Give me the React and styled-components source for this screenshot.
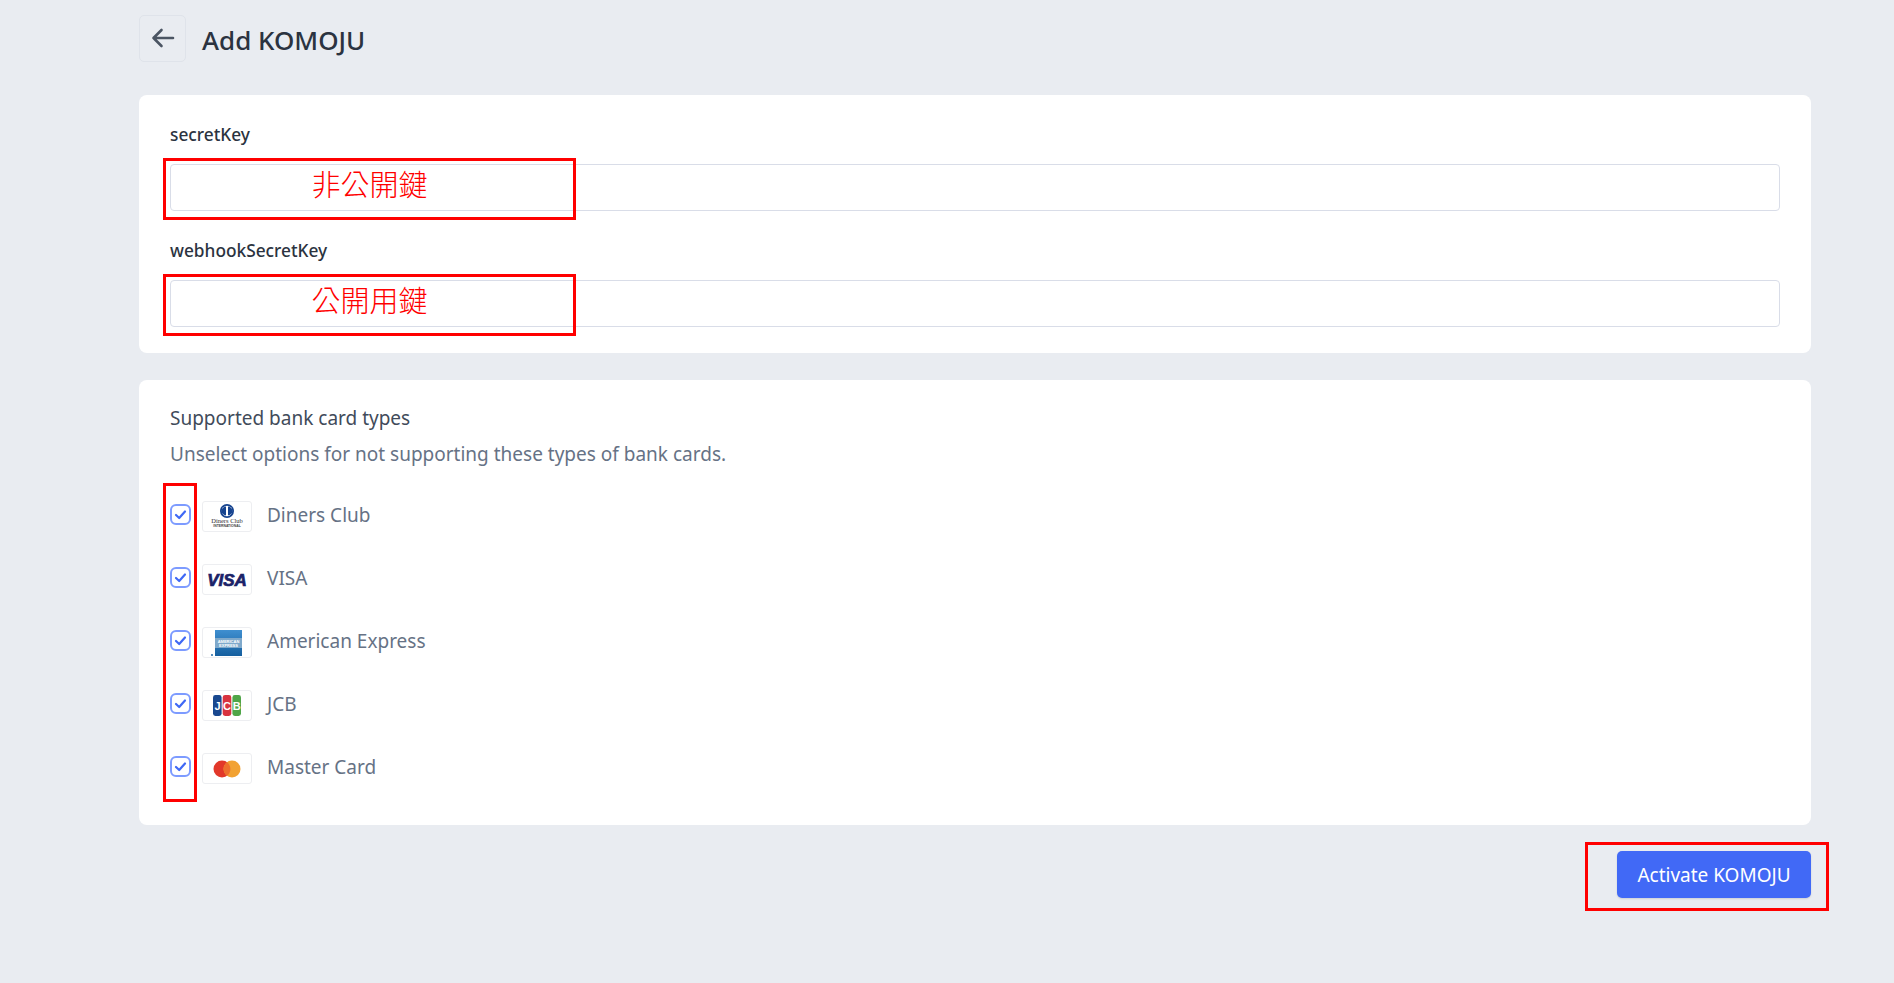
import React from "react";
import styled, { createGlobalStyle } from "styled-components";

const Global = createGlobalStyle`
  html, body { margin: 0; padding: 0; background: #e9ecf1; }
  body { font-family: "Noto Sans", "Noto Sans CJK JP", sans-serif; color: #374151; }
`;

const Page = styled.div`
  width: 1894px;
  height: 983px;
  box-sizing: border-box;
  padding: 15px 83px 0 139px;
  display: flex;
  flex-direction: column;
  overflow: hidden;
`;

const Header = styled.header`
  display: flex;
  align-items: center;
  gap: 16px;
  height: 46px;
  margin-bottom: 34px;
`;

const BackButton = styled.button`
  width: 47px;
  height: 47px;
  box-sizing: border-box;
  padding: 0;
  border: 1px solid #dfe3ea;
  border-radius: 5px;
  background: #e9ecf1;
  color: #4b5563;
  display: flex;
  align-items: center;
  justify-content: center;
`;

const Title = styled.h1`
  margin: 4px 0 0;
  font-size: 26px;
  line-height: 32px;
  font-weight: 500;
  color: #2b3340;
`;

const Card = styled.section`
  position: relative;
  background: #fff;
  border-radius: 8px;
  box-sizing: border-box;
  padding: ${(p) => p.$padding};
  margin-bottom: ${(p) => p.$mb || 0}px;
`;

const Field = styled.div`
  margin-bottom: ${(p) => p.$mb || 0}px;
`;

const Label = styled.label`
  display: block;
  font-size: 17.3px;
  line-height: 24px;
  font-weight: 500;
  color: #2b3340;
  margin-bottom: 17px;
`;

const InputWrap = styled.div`
  position: relative;
`;

const Input = styled.div`
  height: 47px;
  box-sizing: border-box;
  border: 1px solid #d9dde8;
  border-radius: 4px;
  background: #fff;
`;

const Callout = styled.div`
  position: absolute;
  left: -7px;
  top: -6px;
  width: 413px;
  height: 62px;
  box-sizing: border-box;
  border: 3px solid #ff0000;
  color: #ff0000;
  font-family: "Noto Sans CJK TC", "Noto Sans CJK JP", sans-serif;
  font-weight: 300;
  font-size: 29px;
  line-height: 45px;
  text-align: center;
`;

const SectionTitle = styled.div`
  font-size: 19px;
  line-height: 26px;
  color: #414b5a;
  margin-bottom: 10px;
`;

const SectionHint = styled.div`
  font-size: 19px;
  line-height: 26px;
  color: #667285;
  margin-bottom: 32px;
`;

const List = styled.div`
  position: relative;
  display: flex;
  flex-direction: column;
  gap: 32px;
`;

const Row = styled.div`
  display: flex;
  align-items: center;
  height: 31px;
`;

const Check = styled.span`
  width: 21px;
  height: 21px;
  box-sizing: border-box;
  border: 2px solid #7d9bff;
  border-radius: 6px;
  display: flex;
  align-items: center;
  justify-content: center;
  color: #3f68f5;
  margin-right: 11px;
  flex: none;
`;

const Logo = styled.span`
  width: 50px;
  height: 31px;
  margin-top: 4px;
  box-sizing: border-box;
  border: 1px solid #edeef1;
  border-radius: 3px;
  display: flex;
  align-items: center;
  justify-content: center;
  margin-right: 15px;
  flex: none;
`;

const CardName = styled.span`
  font-size: 19px;
  line-height: 26px;
  color: #667285;
`;

const CheckColumnMark = styled.div`
  position: absolute;
  left: -7px;
  top: -16px;
  width: 34px;
  height: 319px;
  box-sizing: border-box;
  border: 3px solid #ff0000;
`;

const Footer = styled.div`
  display: flex;
  justify-content: flex-end;
`;

const ActionWrap = styled.div`
  position: relative;
`;

const ActionMark = styled.div`
  position: absolute;
  left: -32px;
  top: -9px;
  width: 244px;
  height: 69px;
  box-sizing: border-box;
  border: 3px solid #ff0000;
`;

const Activate = styled.button`
  width: 194px;
  height: 47px;
  border: 0;
  border-radius: 5px;
  background: #4169f6;
  color: #fff;
  font-family: inherit;
  font-size: 19px;
  box-shadow: 0 1px 2px rgba(0, 0, 0, 0.12);
`;

const ArrowIcon = () => (
  <svg width="24" height="24" viewBox="0 0 24 24" fill="none" stroke="currentColor" strokeWidth="2.6" strokeLinecap="round" strokeLinejoin="round">
    <path d="M22 12H2.5M10.5 4l-8 8 8 8" />
  </svg>
);

const TickIcon = () => (
  <svg width="13" height="13" viewBox="0 0 13 13" fill="none" stroke="currentColor" strokeWidth="2.2" strokeLinecap="round" strokeLinejoin="round">
    <path d="M2 7l3.2 3L11 3.5" />
  </svg>
);

const DinersLogo = () => (
  <svg width="34" height="29" viewBox="0 0 34 29">
    <circle cx="17" cy="9" r="7" fill="#16438f" />
    <circle cx="17" cy="9" r="5.2" fill="#fff" />
    <path d="M16 4.6v8.8A4.4 4.4 0 0 1 16 4.6zM18 4.6a4.4 4.4 0 0 1 0 8.8z" fill="#16438f" />
    <text x="17" y="21" textAnchor="middle" fontFamily="Liberation Serif, serif" fontSize="6.5" fill="#333">Diners Club</text>
    <text x="17" y="25" textAnchor="middle" fontFamily="Liberation Sans, sans-serif" fontSize="3.4" fontWeight="700" fill="#444">INTERNATIONAL</text>
  </svg>
);

const VisaLogo = () => (
  <svg width="40" height="20" viewBox="0 0 40 20">
    <text x="20" y="16" textAnchor="middle" fontFamily="Liberation Sans, sans-serif" fontStyle="italic" fontWeight="700" fontSize="17" stroke="#1a2268" strokeWidth="0.7" fill="#1a2268">VISA</text>
  </svg>
);

const AmexLogo = () => (
  <svg width="32" height="26" viewBox="0 0 32 26">
    <defs>
      <linearGradient id="amexFill" x1="0" y1="0" x2="0" y2="1">
        <stop offset="0" stopColor="#3f8fd0" />
        <stop offset="1" stopColor="#155f9f" />
      </linearGradient>
    </defs>
    <rect x="4" y="0" width="27" height="26" fill="url(#amexFill)" />
    <rect x="4" y="8" width="27" height="10" fill="#7fa9cb" />
    <text x="17.5" y="12.5" textAnchor="middle" fontFamily="Liberation Sans, sans-serif" fontWeight="700" fontSize="4" fill="#fff">AMERICAN</text>
    <text x="17.5" y="17" textAnchor="middle" fontFamily="Liberation Sans, sans-serif" fontWeight="700" fontSize="4" fill="#fff">EXPRESS</text>
    <rect x="0" y="24" width="2" height="2" fill="#5b90bd" />
  </svg>
);

const JcbLogo = () => (
  <svg width="28" height="21" viewBox="0 0 28 21">
    <rect x="0" y="0" width="8.6" height="21" rx="2.4" fill="#19488f" />
    <rect x="9.7" y="0" width="8.6" height="21" rx="2.4" fill="#d8333f" />
    <rect x="19.4" y="0" width="8.6" height="21" rx="2.4" fill="#4fa548" />
    <text x="4.6" y="15" textAnchor="middle" fontFamily="Liberation Sans, sans-serif" fontWeight="700" fontSize="11" fill="#fff">J</text>
    <text x="14" y="15" textAnchor="middle" fontFamily="Liberation Sans, sans-serif" fontWeight="700" fontSize="11" fill="#fff">C</text>
    <text x="23.7" y="15" textAnchor="middle" fontFamily="Liberation Sans, sans-serif" fontWeight="700" fontSize="11" fill="#fff">B</text>
  </svg>
);

const MasterLogo = () => (
  <svg width="28" height="18" viewBox="0 0 28 18">
    <circle cx="9" cy="9" r="8.5" fill="#e2382a" />
    <circle cx="19" cy="9" r="8.5" fill="#f2a232" />
    <path d="M14 2.2a8.5 8.5 0 0 1 0 13.6a8.5 8.5 0 0 1 0-13.6z" fill="#ed6f2d" />
  </svg>
);

const cards = [
  { name: "Diners Club", Art: DinersLogo },
  { name: "VISA", Art: VisaLogo },
  { name: "American Express", Art: AmexLogo },
  { name: "JCB", Art: JcbLogo },
  { name: "Master Card", Art: MasterLogo },
];

export default function App() {
  return (
    <>
      <Global />
      <Page>
        <Header>
          <BackButton aria-label="Back"><ArrowIcon /></BackButton>
          <Title>Add KOMOJU</Title>
        </Header>

        <Card $padding="28px 31px 26px" $mb={27}>
          <Field $mb={28}>
            <Label>secretKey</Label>
            <InputWrap>
              <Input />
              <Callout>非公開鍵</Callout>
            </InputWrap>
          </Field>
          <Field>
            <Label>webhookSecretKey</Label>
            <InputWrap>
              <Input />
              <Callout>公開用鍵</Callout>
            </InputWrap>
          </Field>
        </Card>

        <Card $padding="25px 31px 43px" $mb={26}>
          <SectionTitle>Supported bank card types</SectionTitle>
          <SectionHint>Unselect options for not supporting these types of bank cards.</SectionHint>
          <List>
            <CheckColumnMark />
            {cards.map(({ name, Art }) => (
              <Row key={name}>
                <Check><TickIcon /></Check>
                <Logo><Art /></Logo>
                <CardName>{name}</CardName>
              </Row>
            ))}
          </List>
        </Card>

        <Footer>
          <ActionWrap>
            <Activate>Activate KOMOJU</Activate>
            <ActionMark />
          </ActionWrap>
        </Footer>
      </Page>
    </>
  );
}
